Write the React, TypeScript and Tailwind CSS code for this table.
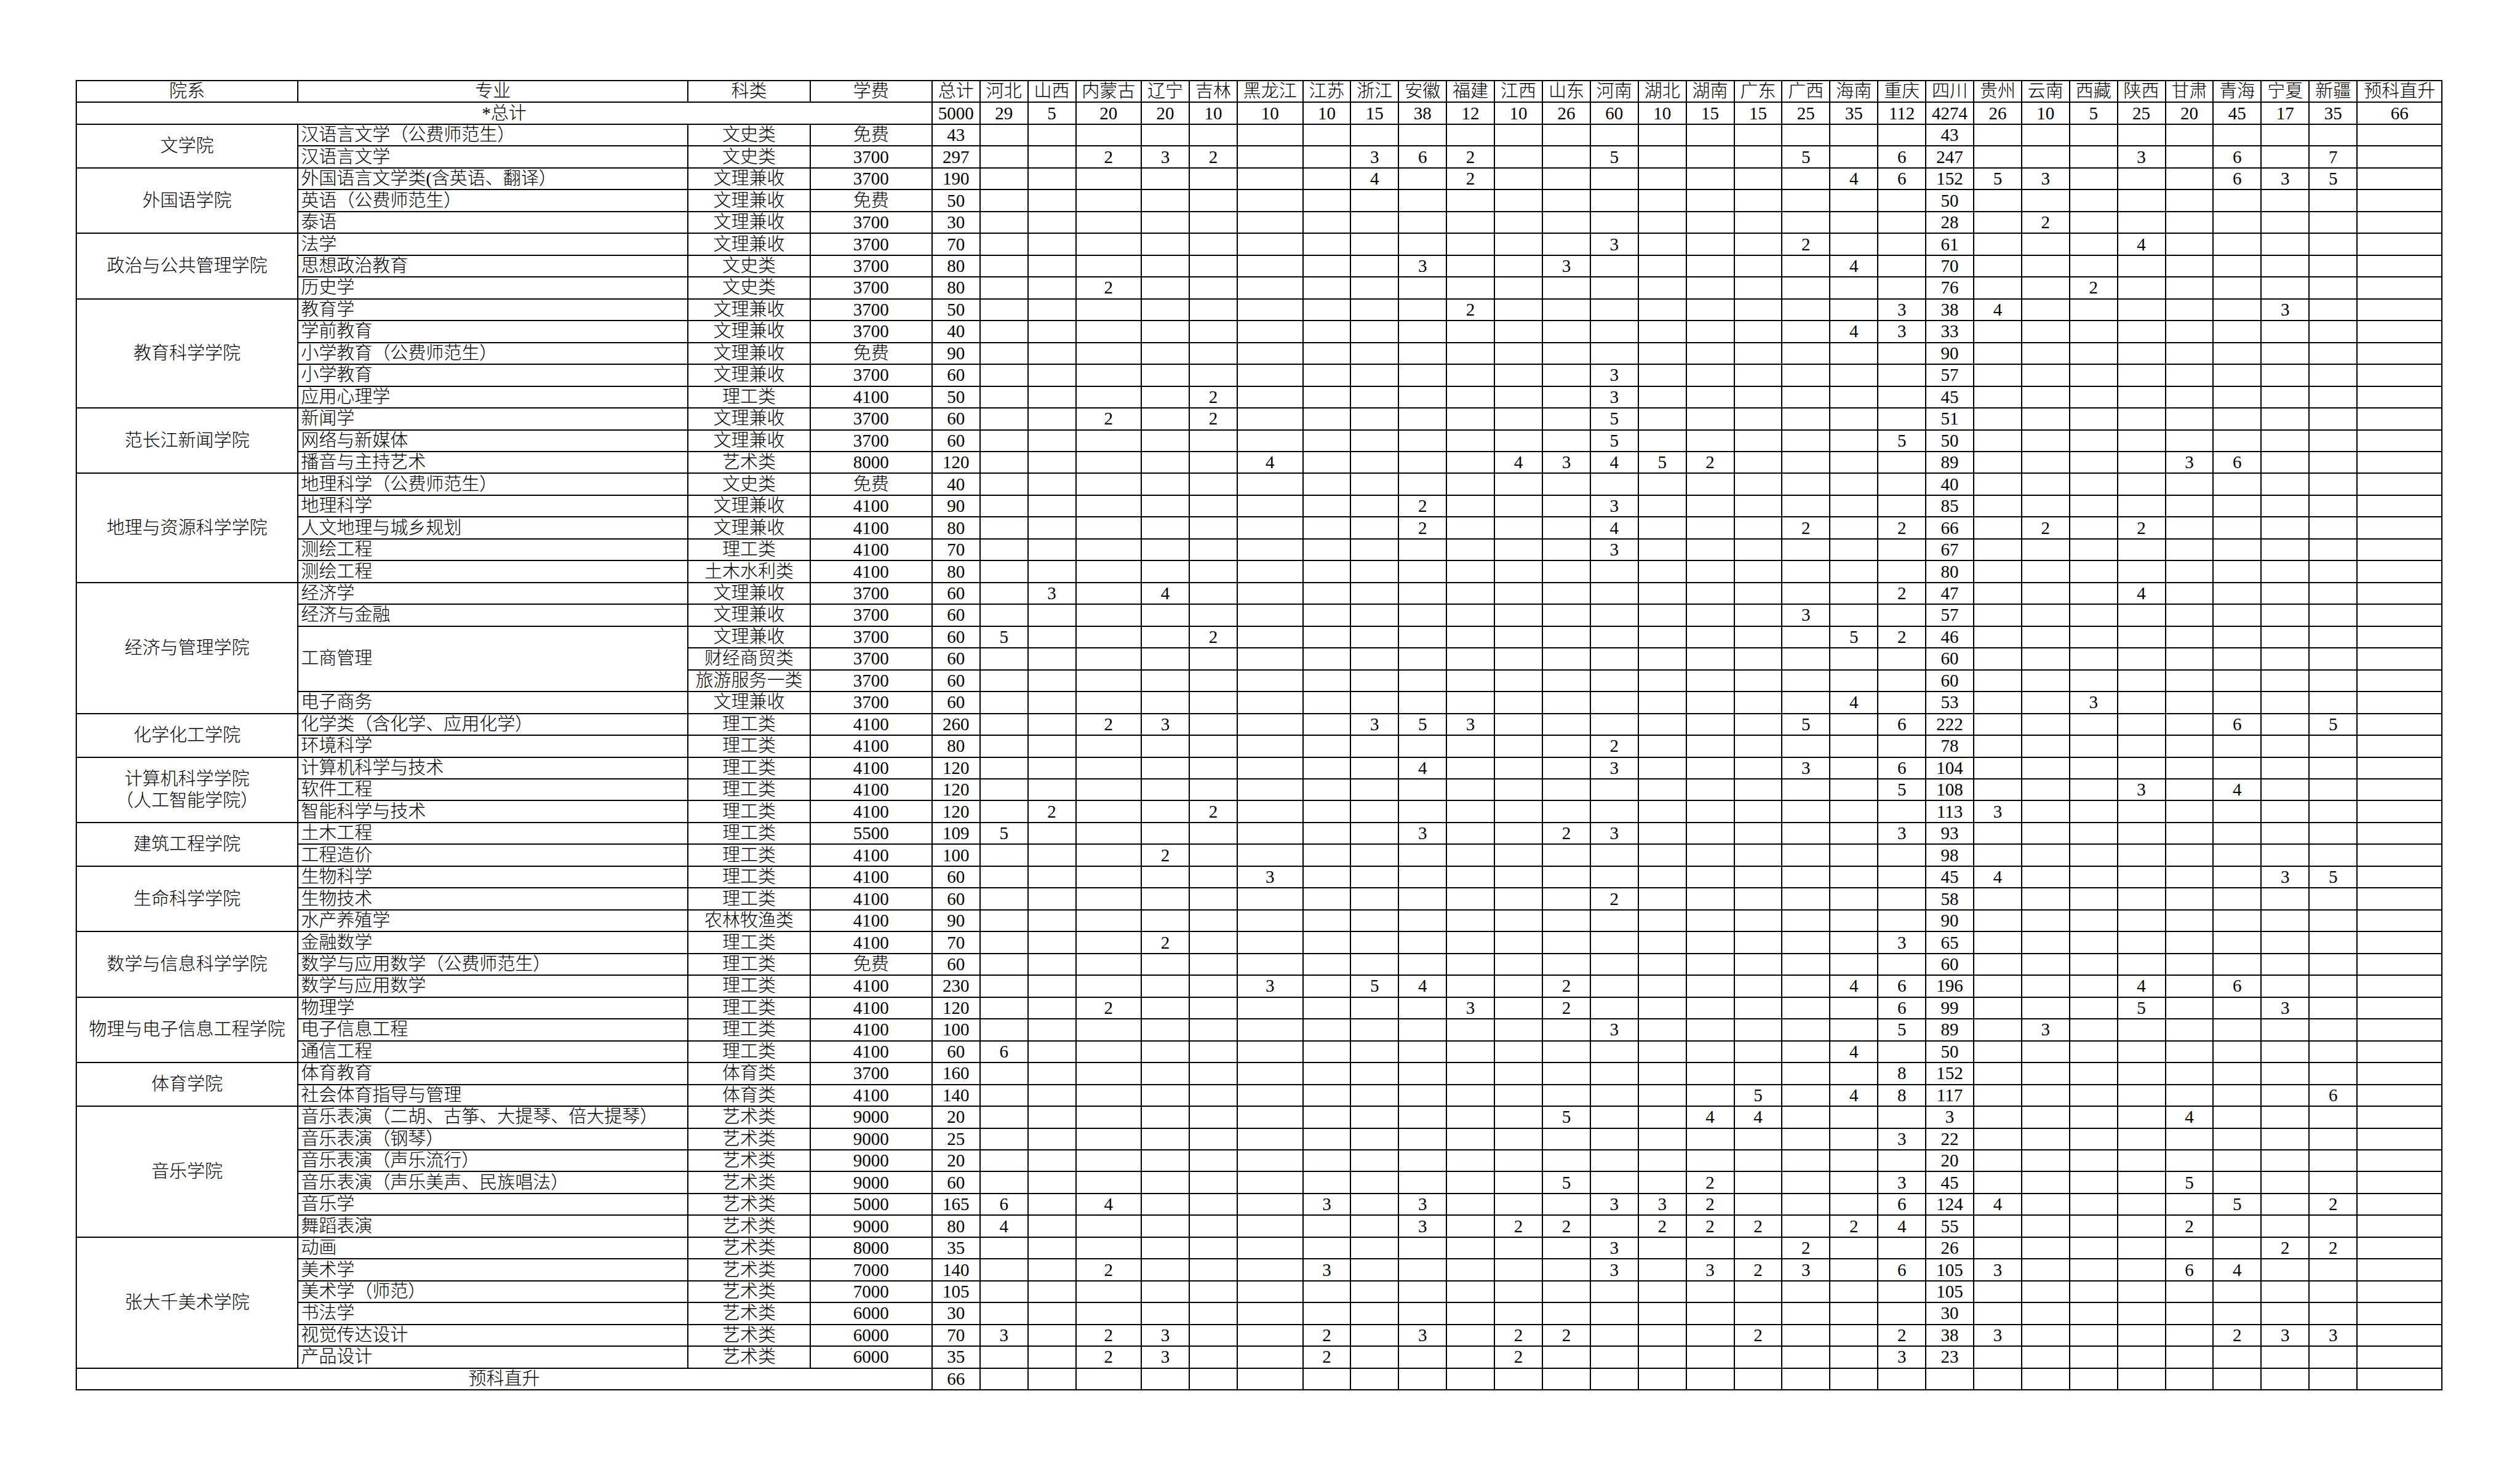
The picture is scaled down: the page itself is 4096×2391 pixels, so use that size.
import React from 'react';

// 省份列顺序（与表头一致）
const PROVINCES = [
  '河北', '山西', '内蒙古', '辽宁', '吉林', '黑龙江', '江苏', '浙江', '安徽', '福建',
  '江西', '山东', '河南', '湖北', '湖南', '广东', '广西', '海南', '重庆', '四川',
  '贵州', '云南', '西藏', '陕西', '甘肃', '青海', '宁夏', '新疆',
];

const PROVINCE_TOTALS: Record<string, number> = {
  河北: 29, 山西: 5, 内蒙古: 20, 辽宁: 20, 吉林: 10, 黑龙江: 10, 江苏: 10, 浙江: 15,
  安徽: 38, 福建: 12, 江西: 10, 山东: 26, 河南: 60, 湖北: 10, 湖南: 15, 广东: 15,
  广西: 25, 海南: 35, 重庆: 112, 四川: 4274, 贵州: 26, 云南: 10, 西藏: 5, 陕西: 25,
  甘肃: 20, 青海: 45, 宁夏: 17, 新疆: 35,
};

type Major = {
  name: string | null;
  nameSpan?: number;
  kind: string;
  fee: string;
  total: number;
  q: Record<string, number>;
};

type College = { name: string[]; majors: Major[] };

const m = (name: string, kind: string, fee: string, total: number, q: Record<string, number> = {}): Major => ({
  name,
  kind,
  fee,
  total,
  q,
});

const COLLEGES: College[] = [
  {
    name: ['文学院'],
    majors: [
      m('汉语言文学（公费师范生）', '文史类', '免费', 43, { 四川: 43 }),
      m('汉语言文学', '文史类', '3700', 297, { 内蒙古: 2, 辽宁: 3, 吉林: 2, 浙江: 3, 安徽: 6, 福建: 2, 河南: 5, 广西: 5, 重庆: 6, 四川: 247, 陕西: 3, 青海: 6, 新疆: 7 }),
    ],
  },
  {
    name: ['外国语学院'],
    majors: [
      m('外国语言文学类(含英语、翻译）', '文理兼收', '3700', 190, { 浙江: 4, 福建: 2, 海南: 4, 重庆: 6, 四川: 152, 贵州: 5, 云南: 3, 青海: 6, 宁夏: 3, 新疆: 5 }),
      m('英语（公费师范生）', '文理兼收', '免费', 50, { 四川: 50 }),
      m('泰语', '文理兼收', '3700', 30, { 四川: 28, 云南: 2 }),
    ],
  },
  {
    name: ['政治与公共管理学院'],
    majors: [
      m('法学', '文理兼收', '3700', 70, { 河南: 3, 广西: 2, 四川: 61, 陕西: 4 }),
      m('思想政治教育', '文史类', '3700', 80, { 安徽: 3, 山东: 3, 海南: 4, 四川: 70 }),
      m('历史学', '文史类', '3700', 80, { 内蒙古: 2, 四川: 76, 西藏: 2 }),
    ],
  },
  {
    name: ['教育科学学院'],
    majors: [
      m('教育学', '文理兼收', '3700', 50, { 福建: 2, 重庆: 3, 四川: 38, 贵州: 4, 宁夏: 3 }),
      m('学前教育', '文理兼收', '3700', 40, { 海南: 4, 重庆: 3, 四川: 33 }),
      m('小学教育（公费师范生）', '文理兼收', '免费', 90, { 四川: 90 }),
      m('小学教育', '文理兼收', '3700', 60, { 河南: 3, 四川: 57 }),
      m('应用心理学', '理工类', '4100', 50, { 吉林: 2, 河南: 3, 四川: 45 }),
    ],
  },
  {
    name: ['范长江新闻学院'],
    majors: [
      m('新闻学', '文理兼收', '3700', 60, { 内蒙古: 2, 吉林: 2, 河南: 5, 四川: 51 }),
      m('网络与新媒体', '文理兼收', '3700', 60, { 河南: 5, 重庆: 5, 四川: 50 }),
      m('播音与主持艺术', '艺术类', '8000', 120, { 黑龙江: 4, 江西: 4, 山东: 3, 河南: 4, 湖北: 5, 湖南: 2, 四川: 89, 甘肃: 3, 青海: 6 }),
    ],
  },
  {
    name: ['地理与资源科学学院'],
    majors: [
      m('地理科学（公费师范生）', '文史类', '免费', 40, { 四川: 40 }),
      m('地理科学', '文理兼收', '4100', 90, { 安徽: 2, 河南: 3, 四川: 85 }),
      m('人文地理与城乡规划', '文理兼收', '4100', 80, { 安徽: 2, 河南: 4, 广西: 2, 重庆: 2, 四川: 66, 云南: 2, 陕西: 2 }),
      m('测绘工程', '理工类', '4100', 70, { 河南: 3, 四川: 67 }),
      m('测绘工程', '土木水利类', '4100', 80, { 四川: 80 }),
    ],
  },
  {
    name: ['经济与管理学院'],
    majors: [
      m('经济学', '文理兼收', '3700', 60, { 山西: 3, 辽宁: 4, 重庆: 2, 四川: 47, 陕西: 4 }),
      m('经济与金融', '文理兼收', '3700', 60, { 广西: 3, 四川: 57 }),
      { ...m('工商管理', '文理兼收', '3700', 60, { 河北: 5, 吉林: 2, 海南: 5, 重庆: 2, 四川: 46 }), nameSpan: 3 },
      { ...m('', '财经商贸类', '3700', 60, { 四川: 60 }), name: null },
      { ...m('', '旅游服务一类', '3700', 60, { 四川: 60 }), name: null },
      m('电子商务', '文理兼收', '3700', 60, { 海南: 4, 四川: 53, 西藏: 3 }),
    ],
  },
  {
    name: ['化学化工学院'],
    majors: [
      m('化学类（含化学、应用化学）', '理工类', '4100', 260, { 内蒙古: 2, 辽宁: 3, 浙江: 3, 安徽: 5, 福建: 3, 广西: 5, 重庆: 6, 四川: 222, 青海: 6, 新疆: 5 }),
      m('环境科学', '理工类', '4100', 80, { 河南: 2, 四川: 78 }),
    ],
  },
  {
    name: ['计算机科学学院', '（人工智能学院）'],
    majors: [
      m('计算机科学与技术', '理工类', '4100', 120, { 安徽: 4, 河南: 3, 广西: 3, 重庆: 6, 四川: 104 }),
      m('软件工程', '理工类', '4100', 120, { 重庆: 5, 四川: 108, 陕西: 3, 青海: 4 }),
      m('智能科学与技术', '理工类', '4100', 120, { 山西: 2, 吉林: 2, 四川: 113, 贵州: 3 }),
    ],
  },
  {
    name: ['建筑工程学院'],
    majors: [
      m('土木工程', '理工类', '5500', 109, { 河北: 5, 安徽: 3, 山东: 2, 河南: 3, 重庆: 3, 四川: 93 }),
      m('工程造价', '理工类', '4100', 100, { 辽宁: 2, 四川: 98 }),
    ],
  },
  {
    name: ['生命科学学院'],
    majors: [
      m('生物科学', '理工类', '4100', 60, { 黑龙江: 3, 四川: 45, 贵州: 4, 宁夏: 3, 新疆: 5 }),
      m('生物技术', '理工类', '4100', 60, { 河南: 2, 四川: 58 }),
      m('水产养殖学', '农林牧渔类', '4100', 90, { 四川: 90 }),
    ],
  },
  {
    name: ['数学与信息科学学院'],
    majors: [
      m('金融数学', '理工类', '4100', 70, { 辽宁: 2, 重庆: 3, 四川: 65 }),
      m('数学与应用数学（公费师范生）', '理工类', '免费', 60, { 四川: 60 }),
      m('数学与应用数学', '理工类', '4100', 230, { 黑龙江: 3, 浙江: 5, 安徽: 4, 山东: 2, 海南: 4, 重庆: 6, 四川: 196, 陕西: 4, 青海: 6 }),
    ],
  },
  {
    name: ['物理与电子信息工程学院'],
    majors: [
      m('物理学', '理工类', '4100', 120, { 内蒙古: 2, 福建: 3, 山东: 2, 重庆: 6, 四川: 99, 陕西: 5, 宁夏: 3 }),
      m('电子信息工程', '理工类', '4100', 100, { 河南: 3, 重庆: 5, 四川: 89, 云南: 3 }),
      m('通信工程', '理工类', '4100', 60, { 河北: 6, 海南: 4, 四川: 50 }),
    ],
  },
  {
    name: ['体育学院'],
    majors: [
      m('体育教育', '体育类', '3700', 160, { 重庆: 8, 四川: 152 }),
      m('社会体育指导与管理', '体育类', '4100', 140, { 广东: 5, 海南: 4, 重庆: 8, 四川: 117, 新疆: 6 }),
    ],
  },
  {
    name: ['音乐学院'],
    majors: [
      m('音乐表演（二胡、古筝、大提琴、倍大提琴）', '艺术类', '9000', 20, { 山东: 5, 湖南: 4, 广东: 4, 四川: 3, 甘肃: 4 }),
      m('音乐表演（钢琴）', '艺术类', '9000', 25, { 重庆: 3, 四川: 22 }),
      m('音乐表演（声乐流行）', '艺术类', '9000', 20, { 四川: 20 }),
      m('音乐表演（声乐美声、民族唱法）', '艺术类', '9000', 60, { 山东: 5, 湖南: 2, 重庆: 3, 四川: 45, 甘肃: 5 }),
      m('音乐学', '艺术类', '5000', 165, { 河北: 6, 内蒙古: 4, 江苏: 3, 安徽: 3, 河南: 3, 湖北: 3, 湖南: 2, 重庆: 6, 四川: 124, 贵州: 4, 青海: 5, 新疆: 2 }),
      m('舞蹈表演', '艺术类', '9000', 80, { 河北: 4, 安徽: 3, 江西: 2, 山东: 2, 湖北: 2, 湖南: 2, 广东: 2, 海南: 2, 重庆: 4, 四川: 55, 甘肃: 2 }),
    ],
  },
  {
    name: ['张大千美术学院'],
    majors: [
      m('动画', '艺术类', '8000', 35, { 河南: 3, 广西: 2, 四川: 26, 宁夏: 2, 新疆: 2 }),
      m('美术学', '艺术类', '7000', 140, { 内蒙古: 2, 江苏: 3, 河南: 3, 湖南: 3, 广东: 2, 广西: 3, 重庆: 6, 四川: 105, 贵州: 3, 甘肃: 6, 青海: 4 }),
      m('美术学（师范）', '艺术类', '7000', 105, { 四川: 105 }),
      m('书法学', '艺术类', '6000', 30, { 四川: 30 }),
      m('视觉传达设计', '艺术类', '6000', 70, { 河北: 3, 内蒙古: 2, 辽宁: 3, 江苏: 2, 安徽: 3, 江西: 2, 山东: 2, 广东: 2, 重庆: 2, 四川: 38, 贵州: 3, 青海: 2, 宁夏: 3, 新疆: 3 }),
      m('产品设计', '艺术类', '6000', 35, { 内蒙古: 2, 辽宁: 3, 江苏: 2, 江西: 2, 重庆: 3, 四川: 23 }),
    ],
  },
];

const cell = 'border-2 border-black p-0 text-center align-middle whitespace-nowrap';
const row = 'h-[35.47px]';

export default function App() {
  return (
    <div className="w-[4096px] h-[2391px] bg-white pl-[123px] pt-[130px] text-black font-['Liberation_Serif','Noto_Sans_CJK_SC',serif] font-light text-[29px] leading-none">
      <table className="table-fixed border-collapse w-[3845px]">
        <colgroup>
          <col className="w-[360.2px]" />
          <col className="w-[633.9px]" />
          <col className="w-[198.7px]" />
          <col className="w-[198.1px]" />
          <col className="w-[77.9px]" />
          {PROVINCES.map((p) => (
            <col key={p} className={p === '内蒙古' || p === '黑龙江' ? 'w-[106.6px]' : 'w-[77.9px]'} />
          ))}
          <col className="w-[138.3px]" />
        </colgroup>
        <tbody>
          <tr className={row}>
            <td className={cell}>院系</td>
            <td className={cell}>专业</td>
            <td className={cell}>科类</td>
            <td className={cell}>学费</td>
            <td className={cell}>总计</td>
            {PROVINCES.map((p) => (
              <td key={p} className={cell}>{p}</td>
            ))}
            <td className={cell}>预科直升</td>
          </tr>
          <tr className={row}>
            <td className={cell} colSpan={4}>*总计</td>
            <td className={cell}>5000</td>
            {PROVINCES.map((p) => (
              <td key={p} className={cell}>{PROVINCE_TOTALS[p]}</td>
            ))}
            <td className={cell}>66</td>
          </tr>
          {COLLEGES.map((college) =>
            college.majors.map((major, i) => (
              <tr key={`${college.name[0]}-${i}`} className={row}>
                {i === 0 && (
                  <td className={`${cell} leading-[1.2]`} rowSpan={college.majors.length}>
                    {college.name.map((line) => (
                      <div key={line}>{line}</div>
                    ))}
                  </td>
                )}
                {major.name !== null && (
                  <td className={`${cell} text-left pl-[4px]`} rowSpan={major.nameSpan ?? 1}>
                    {major.name}
                  </td>
                )}
                <td className={cell}>{major.kind}</td>
                <td className={cell}>{major.fee}</td>
                <td className={cell}>{major.total}</td>
                {PROVINCES.map((p) => (
                  <td key={p} className={cell}>{major.q[p] ?? ''}</td>
                ))}
                <td className={cell}></td>
              </tr>
            ))
          )}
          <tr className={row}>
            <td className={cell} colSpan={4}>预科直升</td>
            <td className={cell}>66</td>
            {PROVINCES.map((p) => (
              <td key={p} className={cell}></td>
            ))}
            <td className={cell}></td>
          </tr>
        </tbody>
      </table>
    </div>
  );
}
